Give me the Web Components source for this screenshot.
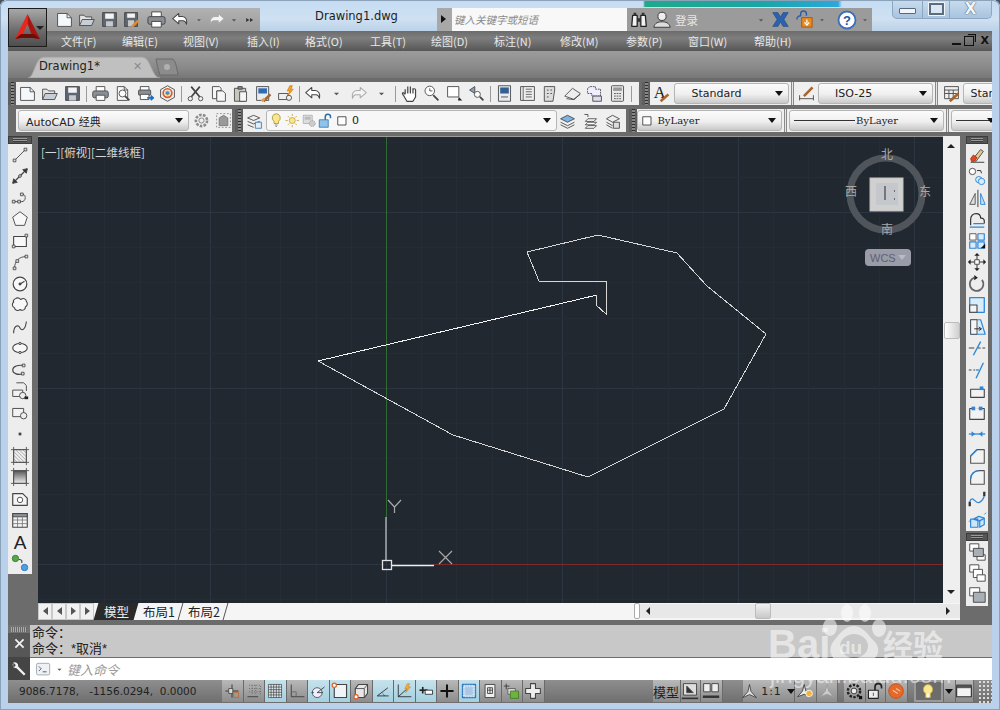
<!DOCTYPE html>
<html lang="zh">
<head>
<meta charset="utf-8">
<title>AutoCAD</title>
<style>
  html, body { margin: 0; padding: 0; background: #4a5562; overflow: hidden; }
  body { font-family: "Liberation Sans", "Noto Sans CJK SC", sans-serif; }
</style>
</head>
<body>
<cad-app>
  <cad-titlebar slot="title" doc="Drawing1.dwg" search="键入关键字或短语" user="登录"></cad-titlebar>
  <cad-menubar items="文件(F) 编辑(E) 视图(V) 插入(I) 格式(O) 工具(T) 绘图(D) 标注(N) 修改(M) 参数(P) 窗口(W) 帮助(H)" widths="61 61 64 58 65 61 63 66 66 62 66 50"></cad-menubar>
  <cad-doctabs label="Drawing1*"></cad-doctabs>

  <cad-toolrow>
    <cad-toolbar style="width:631px">
      <cad-icons icons="new open save | print preview publish pub3d | cut copy paste match block | undo dd redo dd | pan zoomrt zoomwin zoomprev | props dc palette sheet markup calc | help"></cad-icons>
    </cad-toolbar>
    <cad-toolbar style="flex:1;margin-left:3px" overflow>
      <cad-icons icons="textstyle"></cad-icons>
      <cad-combo style="width:115px;margin-left:1px;--indent:10px">Standard</cad-combo>
      <cad-rule></cad-rule>
      <cad-icons icons="dimstyle"></cad-icons>
      <cad-combo style="width:115px;--indent:9px">ISO-25</cad-combo>
      <cad-rule></cad-rule>
      <cad-icons icons="tablestyle"></cad-icons>
      <cad-combo style="width:50px" bare>Standard</cad-combo>
    </cad-toolbar>
  </cad-toolrow>

  <cad-toolrow>
    <cad-toolbar style="width:224px" nogrip>
      <cad-combo style="width:171px;margin:0 1px 0 2px">AutoCAD 经典</cad-combo>
      <cad-icons icons="gear wsbox"></cad-icons>
    </cad-toolbar>
    <cad-toolbar style="width:391px;margin-left:3px">
      <cad-icons icons="layers"></cad-icons>
      <cad-combo style="width:291px" white>
        <cad-icons slot="lead" icons="bulb sun frozen unlock swatch" tight></cad-icons>0
      </cad-combo>
      <cad-icons icons="layer1 layer2 layer3"></cad-icons>
    </cad-toolbar>
    <cad-toolbar style="flex:1;margin-left:3px" overflow>
      <cad-combo style="width:145px;padding-left:1px" serif>
        <cad-icons slot="lead" icons="swatch" tight></cad-icons>ByLayer
      </cad-combo>
      <cad-rule></cad-rule>
      <cad-combo style="width:155px" serif line>ByLayer</cad-combo>
      <cad-rule></cad-rule>
      <cad-combo style="width:50px" serif line></cad-combo>
    </cad-toolbar>
  </cad-toolrow>

  <cad-workspace>
    <cad-dock slot="left" icons="line xline pline polygon rect arc circle cloud spline ellipse ellarc insert makeblock point hatch gradient region table text addsel"></cad-dock>
    <cad-canvas slot="canvas">
      <cad-viewcube></cad-viewcube>
    </cad-canvas>
    <cad-vscroll slot="scroll"></cad-vscroll>
    <cad-layouttabs slot="tabs" active="模型" others="布局1 布局2"></cad-layouttabs>
    <div slot="right" style="width:22px">
      <cad-dock style="width:22px" icons="erase mcopy mirror offset array move rotate scale stretch trim extend breakpt break join chamfer fillet blend explode"></cad-dock>
      <cad-dock style="width:22px;margin-top:2px" icons="front back above"></cad-dock>
    </div>
  </cad-workspace>

  <cad-command history="命令&#65306;|命令&#65306;*取消*" hint="键入命令"></cad-command>
  <cad-statusbar coords="9086.7178,   -1156.0294,  0.0000"></cad-statusbar>
  <cad-watermark slot="over"></cad-watermark>
</cad-app>

<script>
const pg = '<path d="M5 3h8l4 4v12H5z" fill="#f4f6f8"/><path d="M13 3v4h4"/>';
const lens = '<circle cx="11" cy="11" r="4" fill="#fff"/><path d="M14 14l5 5" stroke-width="2"/>';
const grip = (x, y, c = '#333') => `<rect x="${x - 1.5}" y="${y - 1.5}" width="3" height="3" fill="#ddd" stroke="${c}" stroke-width=".8"/>`;
const blue = '#2f86d6';

const ICONS = {
  new: '<path d="M3 4h11l5 5v10H3z" fill="#f5f8fa"/><path d="M14 4v5h5"/>',
  open: '<path d="M3 18V6h5l2 2h7v3" fill="#e3e3e3"/><path d="M3 18l3-7h14l-3 7z" fill="#c7ced6"/>',
  save: '<path d="M3 3h16v16H3z" fill="#5f6773" stroke="#444"/><path d="M6 4h10v6H6z" fill="#f4f4f4" stroke="none"/><path d="M7 13h8v6H7z" fill="#c6c9cd" stroke="none"/>',
  saveas: '<path d="M3 3h15v16H3z" fill="#5f6773" stroke="#444"/><path d="M6 4h9v5H6z" fill="#f4f4f4" stroke="none"/><path d="M7 12h7v7H7z" fill="#c6c9cd" stroke="none"/><path d="M12 19l7-7" stroke="#e98a1a" stroke-width="3"/>',
  print: '<path d="M6 8V3h10v5" fill="#fff"/><rect x="2" y="8" width="18" height="8" rx="2" fill="#8a8f96"/><path d="M6 13h10v6H6z" fill="#fff"/>',
  preview: pg + lens,
  publish: '<path d="M5 7V3h10v4" fill="#fff"/><rect x="3" y="7" width="14" height="6" rx="1" fill="#8a8f96"/><path d="M5 12h10v6H5z" fill="#fff"/><path d="M13 16h6M17 13.5l3 2.5-3 2.5" stroke="#1b6fc2" stroke-width="2"/>',
  pub3d: '<path d="M11 2l8 4.500v9L11 20l-8-4.500v-9z" fill="#eee"/><circle cx="11" cy="10.500" r="5" fill="none" stroke="#e2562a" stroke-width="2"/><circle cx="11" cy="10.500" r="2.500" fill="#3a8fd8" stroke="#e8c020"/>',
  cut: '<path d="M6 3l10 12M16 3L6 15" stroke-width="2"/><circle cx="5" cy="17" r="2.500" fill="#eee"/><circle cx="17" cy="17" r="2.500" fill="#eee"/>',
  copy: '<path d="M4 3h8l2 2v3H9v9H4z" fill="#f4f6f8"/><path d="M9 8h7l3 3v9H9z" fill="#f4f6f8"/>',
  paste: '<path d="M4 5h13v15H4z" fill="#c9c6bd"/><path d="M8 3h5v3H8z" fill="#888"/><path d="M10 9h8v11h-8z" fill="#f5f5f5"/>',
  match: '<path d="M3 3h14v16H3z" fill="#e7ecf2"/><path d="M5 5h10v6H5z" fill="#2e6bb0" stroke="none"/><path d="M11 20l8-8" stroke="#a8642a" stroke-width="3"/><path d="M9 20l3-3" stroke="#e8a13a" stroke-width="3"/>',
  block: '<path d="M3 11h11v7H3z" fill="#eee"/><circle cx="15" cy="16" r="3" fill="#eee"/><path d="M16 2l-3 6h3l-2 5 6-7h-3l2-4z" fill="#f5a81c" stroke="#c9670e" stroke-width=".7"/>',
  undo: '<path d="M9 4L2 10l7 6v-3.500h5c2 0 3 1 4 4 1-5-1-9-5-9H9z" fill="#fff" stroke="#444" stroke-width="1.200"/>',
  redo: '<path d="M13 4l7 6-7 6v-3.500H8c-2 0-3 1-4 4-1-5 1-9 5-9h4z" fill="#f4f4f4" stroke="#aaa" stroke-width="1.200"/>',
  dd: '<path d="M8 10h6l-3 3z" fill="#555" stroke="none"/>',
  more: '<path d="M5 8l5 3-5 3zM11 8l5 3-5 3z" fill="#333" stroke="none"/>',
  pan: '<path d="M6 12V6M9 11V3M12 11V3M15 11V5M6 12L4 10c-2 0-1 2 0 3l4 7h7l3-5V7c0-2-3-2-3 0" fill="#fff" stroke-width="1.400"/>',
  zoomrt: '<circle cx="9" cy="8" r="5.500" fill="#fff"/><path d="M9 5v3h3"/><path d="M13 13l6 6" stroke-width="2"/>',
  zoomwin: '<path d="M3 3h13v12H3z" fill="#fff"/><path d="M16 15l4 4H15z" fill="#222" stroke="none"/>',
  zoomprev: '<path d="M9 3L3 7l6 4z" fill="#8aa0b8"/>' + '<circle cx="12" cy="12" r="3.500" fill="#fff"/><path d="M15 15l4 4" stroke-width="2"/>',
  props: '<path d="M4 2h14v18H4z" fill="#e6ebf0"/><path d="M6 4h10v7H6z" fill="#345f92" stroke="none"/><path d="M7 15h8"/>',
  dc: '<path d="M3 3h16v16H3z" fill="#eee"/><path d="M6 3v16M9 6h7M9 9h7M9 12h7M9 15h7" stroke="#555"/>',
  palette: '<path d="M5 3h12v4l-2 13H5z" fill="#ddd"/><path d="M8 7h2M12 7h2M8 11h2M12 11h2M8 15h2"/>',
  sheet: '<path d="M2 14l9-9 9 6-7 7z" fill="#eee"/><path d="M4 17l8 1 8-6"/>',
  markup: '<path d="M6 3h6v3h6v8H8v-3H3V5z" fill="#eef" stroke-dasharray="2 1"/><path d="M9 14h10v6H9z" fill="#dde"/>',
  calc: '<rect x="4" y="2" width="14" height="18" rx="1" fill="#e8e8e8"/><path d="M6 4h10v4H6z" fill="#999" stroke="none"/><path d="M7 11h8M7 14h8M7 17h8" stroke-dasharray="2 1"/>',
  help: '<path d="M4 4h14v15H4z" fill="#f3f3f3" stroke="#333"/><text x="11" y="16" font-family="Liberation Sans" font-weight="700" font-size="13" text-anchor="middle" fill="#333" stroke="none">?</text>',
  textstyle: '<text x="2" y="16" font-family="Liberation Serif" font-size="19" fill="#222" stroke="none">A</text><path d="M10 20l9-8" stroke="#a8642a" stroke-width="3"/>',
  dimstyle: '<path d="M3 13v6M19 13v6M3 17h16"/><path d="M8 14l10-10" stroke="#a8642a" stroke-width="3"/>',
  tablestyle: '<path d="M3 3h16v14H3z" fill="#eee"/><path d="M3 7h16M3 11h16M8 7v10M13 7v10"/><path d="M9 20l10-9" stroke="#a8642a" stroke-width="3"/>',
  gear: '<circle cx="11" cy="11" r="6.500" fill="none" stroke-dasharray="3 1.500" stroke-width="3" stroke="#8b8b8b"/><circle cx="11" cy="11" r="3" fill="#eee" stroke="#777"/>',
  wsbox: '<path d="M3 3h16v16H3z" fill="none" stroke="#888" stroke-dasharray="2 2"/><path d="M6 8l5-3 5 3v9H6z" fill="#999" stroke="#777"/>',
  layers: '<path d="M3 8l7-3 7 3-7 3zM3 12l7 3 7-3M3 16l7 3" fill="none"/><rect x="12" y="13" width="7" height="7" fill="#e4eef7" stroke="#3a7ab8"/>',
  bulb: '<path d="M11 2a5.500 5.500 0 0 0-3 10v3h6v-3a5.500 5.500 0 0 0-3-10z" fill="#fbe78a" stroke="#a08a3a"/><path d="M9 17h4M10 19h2" stroke="#777"/>',
  sun: '<circle cx="11" cy="11" r="4" fill="#fbe78a" stroke="#b79a3a"/><path d="M11 2v3M11 17v3M2 11h3M17 11h3M5 5l2 2M15 15l2 2M17 5l-2 2M5 17l2-2" stroke="#b79a3a"/>',
  frozen: '<path d="M3 4h12v11H3z" fill="#ddd" stroke="#aaa"/><path d="M5 6h8v4H5z" fill="#bbb" stroke="none"/><circle cx="15" cy="15" r="4" fill="#ccc" stroke="#999" stroke-dasharray="2 1"/>',
  unlock: '<path d="M3 10h12v10H3z" fill="#8fc3ea" stroke="#2c6ea8"/><path d="M11 10V6a3.500 3.500 0 0 1 7 0v2" stroke="#2c6ea8" stroke-width="2"/>',
  swatch: '<path d="M5 6h11v11H5z" fill="#fff" stroke="#222"/>',
  layer1: '<path d="M3 9l8-4 8 4-8 4z" fill="#7db4e4"/><path d="M3 13l8 4 8-4M3 16l8 4 8-4" stroke="#444"/>',
  layer2: '<path d="M8 9h10l-3 3H5zM8 13h10l-3 3H5zM8 17h10l-3 3H5z" fill="#fff"/><path d="M4 4h4v3" stroke="#444"/>',
  layer3: '<path d="M4 9l7-4 8 4-8 4zM4 13l7 4M4 16l7 4" fill="#eee"/><rect x="12" y="13" width="7" height="7" fill="#ddd"/>',
  line: '<path d="M5 17L17 5"/>' + grip(5, 17) + grip(17, 5),
  xline: '<path d="M3 19L19 3" stroke-width="1.300"/><path d="M3 19l5-1-4-4zM19 3l-5 1 4 4z" fill="#333"/><circle cx="11" cy="11" r="1.500" fill="#ddd"/>',
  pline: '<path d="M4 15h9c5 0 5-9 0-8" fill="none"/>' + grip(4, 15) + grip(10, 15) + grip(13, 7),
  polygon: '<path d="M11 3l8 6-3 9H6L3 9z" fill="#f8f8f8" stroke="#444"/>',
  rect: '<path d="M4 6h14v11H4z" fill="#f8f8f8" stroke="#444" stroke-width="1.200"/>' + grip(18, 5) + grip(4, 17),
  arc: '<path d="M5 18c0-8 5-13 13-13"/>' + grip(5, 18) + grip(8, 10) + grip(18, 5),
  circle: '<circle cx="11" cy="11" r="7.500" fill="#f8f8f8" stroke-width="1.300"/><path d="M11 11l5-3" stroke-width="1.200"/><circle cx="11" cy="11" r="1.200" fill="#333"/>',
  cloud: '<path d="M6 4c3-2 5 0 6 1 2-2 6-1 6 2 2 2 1 5-1 6 0 3-3 5-6 3-2 2-6 1-6-2-3-1-3-5-1-6-1-2 0-3 2-4z" fill="#f8f8f8" stroke-width="1.200"/>',
  spline: '<path d="M4 18c0-9 5-10 7-6s6 2 7-7" stroke-width="1.200"/>',
  ellipse: '<ellipse cx="11" cy="11" rx="8" ry="5" fill="#f8f8f8" stroke-width="1.200"/><circle cx="11" cy="6" r="1.300" fill="#ccc"/><circle cx="11" cy="16" r="1.300" fill="#ccc"/>',
  ellarc: '<path d="M14 15C9 17 3 15 3 11s6-6 12-5" stroke-width="1.200"/>' + grip(15, 6) + grip(14, 15),
  insert: '<path d="M7 2h8l3 3v6" fill="#eee"/><path d="M3 10h11v7H3z" fill="#f2f2f2"/><circle cx="14" cy="16" r="3.500" fill="#eee"/><path d="M16 17h4v3h-4z" fill="#222" stroke="none"/>',
  makeblock: '<path d="M3 6h12v9H3z" fill="#f2f2f2"/><circle cx="15" cy="14" r="3.500" fill="#eee"/>',
  point: '<rect x="9.500" y="9.500" width="3" height="3" fill="#444" stroke="none"/>',
  hatch: '<path d="M4 4h14v14H4z" fill="#eee"/><path d="M6 4l12 12M10 4l8 8M14 4l4 4M4 6l12 12M4 10l8 8M4 14l4 4" stroke="#888" stroke-width=".7"/><path d="M1 4h20M1 18h20M4 1v20M18 1v20" stroke="#555"/>',
  gradient: '<defs><linearGradient id="g" x2="0" y2="1"><stop offset="0" stop-color="#555"/><stop offset="1" stop-color="#eee"/></linearGradient></defs><path d="M4 4h14v14H4z" fill="url(#g)"/><path d="M1 4h20M1 18h20M4 1v20M18 1v20" stroke="#555"/>',
  region: '<path d="M3 5h11l5 5v8H3z" fill="#f4f4f4" stroke-width="1.300"/><circle cx="11" cy="12" r="3" fill="#fff"/>',
  table: '<path d="M3 4h16v15H3z" fill="#f4f4f4" stroke="#444" stroke-width="1.200"/><path d="M3 4h16v3.500H3z" fill="#8e939a"/><path d="M3 11h16M3 15h16M8.300 8v11M13.600 8v11" stroke="#666" stroke-width=".8"/>',
  text: '<text x="11" y="19" font-family="Liberation Sans" font-size="21" text-anchor="middle" fill="#222" stroke="none">A</text>',
  addsel: '<circle cx="6" cy="6" r="3.500" fill="#55a845" stroke="#3a7a30"/><circle cx="16" cy="16" r="3.500" fill="#4da0e6" stroke="#2c75b8"/><path d="M10 7l3 1v3" stroke="#222"/>',
  erase: '<path d="M4 19h15" stroke="#333"/><path d="M6 16l9-11 3 2-8 11z" fill="#e5c98d"/><path d="M4 15l3-4 4 3-3 4H5z" fill="#e14a22" stroke="#a9340f"/>',
  mcopy: '<circle cx="6" cy="6" r="3.500" fill="#fff"/><path d="M11 5h4l1 3" stroke="#222"/><circle cx="13" cy="15" r="3.500" fill="#d9ecfa" stroke="' + blue + '"/><circle cx="16" cy="17" r="3.500" fill="#d9ecfa" stroke="' + blue + '"/>',
  mirror: '<path d="M3 18L9 6v12z" fill="#ddd" stroke="#555"/><path d="M12 2v19" stroke="#333"/><path d="M15 6l5 12h-5z" fill="#bfe0f6" stroke="' + blue + '"/>',
  offset: '<path d="M4 18V12c0-5 3-7 6-7s5 2 5 5h1c2 0 3 2 3 3v3" stroke="#333" stroke-width="1.300"/><path d="M3 20h16M7 16h12" stroke="' + blue + '" stroke-width="1.400"/>',
  array: '<path d="M3 3h7v7H3z" fill="#fff" stroke="#555"/><path d="M12 3h7v7h-7zM3 12h7v7H3z" fill="#d9ecfa" stroke="' + blue + '" stroke-width="1.300"/><path d="M12 12h7v7h-7z" fill="#d9ecfa" stroke="' + blue + '" stroke-width="1.300"/><path d="M15 19h5v-5z" fill="#111" stroke="none"/>',
  move: '<path d="M11 3v16M3 11h16" stroke="#222"/><path d="M11 1l3 3H8zM11 21l3-3H8zM1 11l3-3v6zM21 11l-3-3v6z" fill="#222" stroke="none"/><rect x="8.500" y="8.500" width="5" height="5" fill="#fff"/>',
  rotate: '<path d="M16.500 6.500A7.500 7.500 0 1 1 8 4" stroke-width="2" stroke="#666"/><path d="M8 1l4 3-4 3z" fill="#222" stroke="none"/>',
  scale: '<path d="M3 3h16v16H3z" fill="#d9ecfa" stroke="' + blue + '" stroke-width="1.400"/><path d="M3 11h8v8H3z" fill="#f4f4f4" stroke="#444" stroke-width="1.200"/>',
  stretch: '<path d="M4 3h11l5 16H4z" fill="#d9ecfa" stroke="' + blue + '" stroke-width="1.300"/><path d="M4 3h7v16H4z" fill="#f4f4f4" stroke="#444"/><path d="M8 13h7M13 11l3 2-3 2" stroke="#222"/>',
  trim: '<path d="M2 11h6" stroke="#333"/><path d="M12 11h8" stroke="#333" stroke-dasharray="3 2"/><path d="M7 19l8-15" stroke="' + blue + '" stroke-width="1.500"/>',
  extend: '<path d="M2 11h7" stroke="#333" stroke-dasharray="3 2"/><path d="M10 11h3" stroke="' + blue + '" stroke-width="1.500"/><path d="M10 20l8-17" stroke="' + blue + '" stroke-width="1.500"/>',
  breakpt: '<path d="M4 9h15v9H4z" fill="#f2f2f2" stroke="#444" stroke-width="1.200"/><rect x="14" y="6" width="4" height="4" fill="' + blue + '" stroke="none"/>',
  break: '<path d="M3 6h16v12H3z" fill="#f2f2f2" stroke="#444" stroke-width="1.200"/><path d="M8 5h5" stroke="#eee" stroke-width="3"/><rect x="5" y="4" width="4" height="4" fill="' + blue + '" stroke="none"/><rect x="13" y="4" width="4" height="4" fill="' + blue + '" stroke="none"/>',
  join: '<path d="M2 11h18" stroke="' + blue + '" stroke-width="1.400"/><path d="M5 8l4 3-4 3zM17 8l-4 3 4 3z" fill="' + blue + '" stroke="none"/>',
  chamfer: '<path d="M4 19V11l7-7h8v15z" fill="#f2f2f2" stroke="#555" stroke-width="1.200"/><path d="M4 11l7-7" stroke="' + blue + '" stroke-width="1.600"/>',
  fillet: '<path d="M4 19v-6c0-5 4-9 9-9h6v15z" fill="#f2f2f2" stroke="#555" stroke-width="1.200"/><path d="M4 13c0-5 4-9 9-9" stroke="' + blue + '" stroke-width="1.600"/>',
  blend: '<path d="M3 19v-5M19 8V3" stroke="#333" stroke-width="2.500"/><path d="M3 14c3-8 6 2 10 1s5-5 6-7" stroke="' + blue + '" stroke-width="1.500"/>',
  explode: '<path d="M7 10l6-3 6 2-6 3zM4 10h8v9H4zM14 12l5-3v7l-5 3z" fill="#cfe6f8" stroke="' + blue + '" stroke-width="1.300"/><path d="M2 13l2-2M19 5l2-2" stroke="' + blue + '"/>',
  front: '<path d="M3 2h10v8H3z" fill="#fff"/><path d="M11 14h9v6h-9z" fill="#fff"/><path d="M7 7h11v9H7z" fill="#a9afb6"/>',
  back: '<path d="M3 2h10v8H3z" fill="#fff"/><path d="M7 7h10v9H7z" fill="#fff"/><path d="M11 13h9v7h-9z" fill="#fff"/>',
  above: '<path d="M3 3h11v9H3z" fill="#fff"/><path d="M7 8h13v11H7z" fill="#a9afb6"/>',
  snapinf: '<path d="M11 3v16M3 11h16" stroke="#222"/><rect x="7" y="8" width="5" height="6" fill="#ddd"/><path d="M13 13h6v6h-6z" fill="none" stroke="#c8642a"/>',
  snap: '<path d="M5 4h14v12M5 8h14M5 12h14M9 4v12M13 4v12" stroke="#555" stroke-dasharray="1 2"/><path d="M3 18h13" stroke="#333"/>',
  grid: '<path d="M3 3h16v16H3zM3 6.200h16M3 9.400h16M3 12.600h16M3 15.800h16M6.200 3v16M9.400 3v16M12.600 3v16M15.800 3v16" stroke="#333" stroke-width=".8" fill="#e6eef2"/>',
  ortho: '<path d="M4 3v15h16" stroke="#333"/><path d="M4 12h6v6" stroke="#666"/>',
  polar: '<circle cx="10" cy="13" r="6" fill="#eef"/><path d="M10 13l9-7M10 13h7" stroke="#333"/><path d="M3 13h3" stroke="#333"/>',
  osnap: '<path d="M4 3h15v16H4z" fill="#f0f4f6" stroke="#444" stroke-width="1.400"/><circle cx="4" cy="4" r="2.600" fill="#fff" stroke="#e0602a" stroke-width="1.500"/>',
  osnap3: '<path d="M8 3h11v11l-4 5H4V8z" fill="#e7e7e7" stroke="#444" stroke-width="1.300"/><path d="M4 8h11v11M15 8l4-5" stroke="#444"/><circle cx="5" cy="18" r="2.600" fill="#fff" stroke="#e0602a" stroke-width="1.500"/>',
  otrack: '<path d="M4 17h14" stroke="#222"/><path d="M4 17L17 7" stroke="#222"/><path d="M10 13l3 4" stroke="#222" stroke-dasharray="1 1"/>',
  ducs: '<path d="M4 3v15h16" stroke="#222"/><path d="M4 18L14 9" stroke="#222"/><path d="M15 2l-3 6h3l-2 5 6-7h-3l2-4z" fill="#f3b02a" stroke="#c9781a" stroke-width=".6"/>',
  dyn: '<path d="M3 10h10" stroke="#222" stroke-width="2"/><path d="M7 6v8" stroke="#222" stroke-width="2"/><path d="M10 10h9v5h-9z" fill="#fff" stroke="#222"/>',
  lwt: '<path d="M3 11h16M11 3v16" stroke="#111" stroke-width="2.500"/>',
  tpy: '<path d="M3 3h16v16H3z" fill="#a9c7e6" stroke="#2f78c4" stroke-width="1.500"/><path d="M5 5h12v12H5z" fill="none" stroke="#dfeaf5" stroke-dasharray="1 1" stroke-width="3"/>',
  qp: '<path d="M5 3h12v16H5z" fill="#efefef" stroke="#333"/><path d="M8 7h6v7H8z" fill="none" stroke="#333"/><path d="M8 10h6M11 7v7" stroke="#333"/>',
  sc: '<path d="M4 2v7M1 5h7" stroke="#333"/><path d="M6 8h9v7H6z" fill="#ddd" stroke="#555"/><path d="M9 11h10v9H9z" fill="#6cb33f" stroke="#3d7a1f"/>',
  plus: '<path d="M8 2h6v6h6v6h-6v6H8v-6H2V8h6z" fill="#eee" stroke="#444" stroke-width="1.300"/>',
  modelview: '<path d="M3 2h16v14H3z" fill="#dedede" stroke="#333"/><path d="M7 13V5l8 8z" fill="#333"/><path d="M1 20h20" stroke="#333" stroke-width="2"/>',
  layoutview: '<path d="M2 2h8v10H2zM12 2h8v10h-8z" fill="#eee" stroke="#333"/><path d="M1 18h20" stroke="#333" stroke-width="3"/>',
  anno: '<path d="M11 2l2 9 7 8-9-4-9 4 7-8z" fill="#ddd" stroke="#333"/>',
  annovis: '<path d="M10 3l2 8 6 7-8-3-8 3 6-7z" fill="#eee" stroke="#333"/><circle cx="16" cy="14" r="4" fill="#f4b437" stroke="#fff"/>',
  annoauto: '<path d="M11 3l2 8 6 7-8-3-8 3 6-7z" fill="#ccc" stroke="#999"/>',
  wsgear: '<circle cx="11" cy="11" r="7.500" fill="none" stroke="#222" stroke-width="3" stroke-dasharray="3 1.700"/><circle cx="11" cy="11" r="3.500" fill="#eee" stroke="#222"/><path d="M17 17h4v4h-4z" fill="#111" stroke="none"/>',
  tblock: '<path d="M3 10h12v10H3z" fill="#eee" stroke="#222" stroke-width="1.300"/><path d="M9 13v4"/><path d="M11 10V6a4 4 0 0 1 8 0v2" stroke="#222" stroke-width="2"/>',
  hw: '<circle cx="11" cy="11" r="9" fill="#e4692a" stroke="#c24f16"/><path d="M7 10l6 4M11 8l5 3" stroke="#f7c39c" stroke-width="1.500"/>',
  lamp: '<path d="M11 3a6 6 0 0 0-3 11v5h6v-5a6 6 0 0 0-3-11z" fill="#fbe88e" stroke="#c0a84a"/><path d="M10 14h2v5h-2z" fill="#fff" stroke="none"/>',
  clean: '<path d="M2 4h18v14H2z" fill="#f4f4f4" stroke="#333" stroke-width="1.400"/><path d="M2 4h18v3H2z" fill="#555"/>',
  binoc: '<path d="M4 6h5v12H3zM13 6h5l1 12h-6z" fill="#f2f2f2" stroke="#222" stroke-width="1.400"/><path d="M9 9h4v4H9z" fill="#333" stroke="none"/><path d="M5 3h3v3H5zM14 3h3v3h-3z" fill="#333" stroke="none"/>',
  user: '<circle cx="11" cy="7" r="4.500" fill="#eee" stroke="#333"/><path d="M2 19c1-5 5-6 9-6s8 1 9 6z" fill="#ddd" stroke="#333"/>',
  x: '<path d="M2 3h6l3 5 3-5h6l-5 8 5 8h-6l-3-5-3 5H2l5-8z" fill="#2b62b0" stroke="#1b437c" stroke-width=".6"/>',
  exch: '<path d="M3 11a4 4 0 0 1 4-4V5a3 3 0 0 1 6 0v2" stroke="#2c5ea8" stroke-width="1.500"/><rect x="8" y="9" width="11" height="10" fill="#e88a1f" stroke="#a45d10"/><path d="M13.500 11v4M11 14l2.500 3 2.500-3" stroke="#fff" stroke-width="1.300"/>',
  qmark: '<circle cx="11" cy="11" r="8.500" fill="#fff" stroke="#3b6fb8" stroke-width="1.800"/><text x="11" y="15.500" font-family="Liberation Sans" font-weight="700" font-size="13" text-anchor="middle" fill="#1f56a6" stroke="none">?</text>',
  term: '<rect x="2" y="3" width="17" height="15" rx="2" fill="#eef1f5" stroke="#8d99a6"/><path d="M5 7l3 3-3 3M10 14h5" stroke="#333"/>',
  wrench: '<path d="M4 3a4.500 4.500 0 0 0 4 7l9 9 2-2-9-9a4.500 4.500 0 0 0-6-5l3 3-1 2-2 1z" fill="#f2f2f2" stroke="none"/>',
  closex: '<path d="M5 5l12 12M17 5L5 17" stroke="#f2f2f2" stroke-width="2.600"/>',
};

class CadBase extends HTMLElement {
  constructor() {
    super();
    this.attachShadow({ mode: 'open' });
  }
  connectedCallback() {
    this.shadowRoot.innerHTML = this.render();
  }
  attr(name, fallback = '') {
    return this.getAttribute(name) ?? fallback;
  }
}

class CadIcon extends CadBase {
  render() {
    const size = this.attr('size', 20);
    return `<style>:host{display:inline-flex;align-items:center;justify-content:center;flex:none}svg{display:block}</style>
      <svg width="${size}" height="${size}" viewBox="0 0 22 22" fill="none" stroke="#444" stroke-width="1" stroke-linejoin="round">${ICONS[this.attr('name')] || ''}</svg>`;
  }
}

// space separated names, "|" gives a separator
class CadIcons extends CadBase {
  render() {
    const tight = this.hasAttribute('tight');
    const cells = this.attr('icons').split(/\s+/).map(n => n === '|'
      ? '<i></i>'
      : `<cad-icon name="${n}" size="${tight ? 17 : 19}"></cad-icon>`).join('');
    return `<style>
      :host{display:inline-flex;align-items:center;height:100%;flex:none}
      cad-icon{width:${tight ? 16.5 : 22.5}px;height:100%}
      i{width:1px;height:16px;margin:0 2.25px;background:#9a9a9a;flex:none}
    </style>${cells}`;
  }
}

class CadRule extends CadBase {
  render() {
    return `<style>:host{display:block;width:3px;margin:0 2px;height:100%;background:#e6e6e6;border:solid #8a8a8a;border-width:0 1px;box-sizing:border-box;flex:none}</style>`;
  }
}

class CadCombo extends CadBase {
  render() {
    const serif = this.hasAttribute('serif');
    const line = this.hasAttribute('line') ? '<b></b>' : '';
    return `<style>
      :host{display:flex;align-items:center;height:21px;box-sizing:border-box;flex:none;border:1px solid #b5b5b5;border-radius:3px;
        background:linear-gradient(#fbfbfb 0,#efefef 55%,#c9c9c9 100%);color:#222;
        font:${serif ? '10px "DejaVu Serif"' : '11px "DejaVu Sans"'},"Noto Sans CJK SC",sans-serif;padding:0 7px;position:relative;overflow:hidden;white-space:nowrap}
      :host([white]){background:#f7f7f7;padding-left:1px}
      :host([bare]){padding-right:0}
      :host([line]) .t{margin-left:auto;margin-right:38px}
      .t{display:flex;align-items:center;gap:2px;padding-left:var(--indent,0)}
      b{position:absolute;left:4px;width:61px;height:1px;background:#333}
      u{position:absolute;right:5px;top:7px;border:4px solid transparent;border-top:5px solid #111;border-bottom:0}
      :host([bare]) u{display:none}
    </style>${line}<span class="t"><slot name="lead"></slot><slot></slot></span><u></u>`;
  }
}

class CadToolbar extends CadBase {
  render() {
    return `<style>
      :host{display:flex;height:100%;flex:none;overflow:hidden}
      .grip{width:8px;flex:none;background:repeating-linear-gradient(#2f2f2f 0 1px,#888 1px 3px) center/3px 100% no-repeat #5e5e5e}
      :host([nogrip]) .grip{width:8px;background:#6b6b6b}
      :host([overflow]){min-width:0}
      .strip{flex:1;display:flex;align-items:center;background:#efefef;min-width:0;overflow:hidden}
    </style><div class="grip"></div><div class="strip"><slot></slot></div>`;
  }
}

class CadToolrow extends CadBase {
  render() {
    return `<style>:host{display:flex;height:23px;margin-top:4px;width:984px}</style><slot></slot>`;
  }
}

class CadTitlebar extends CadBase {
  render() {
    return `<style>
      :host{display:block;height:31px;position:relative;
        background:
          linear-gradient(90deg,#0000 643px,#1fa98a 645px,#1aa6a4 760px,#2aa8dc 838px,#0000 842px) 0 0/100% 7px no-repeat,
          linear-gradient(180deg,#c4dcf2,#cfe1f2 60%,#bcd2e8)}
      .row{display:flex;align-items:stretch;height:23px;position:absolute;top:8px;left:0;right:0;padding-left:47px}
      .qat{width:213px;display:flex;align-items:center;background:linear-gradient(#b2b2b2,#9c9c9c);flex:none;padding-left:6px;box-sizing:border-box}
      .qat cad-icon{width:22.5px}
      .qat cad-icon.a{width:14px}
      .qat cad-icon.b{width:20px}
      .qat cad-icon.c{width:16px}
      .doc{flex:none;width:177px;text-align:center;font:11.500px "DejaVu Sans",sans-serif;color:#1c1c1c;line-height:16px;padding-left:16px;box-sizing:border-box}
      .find{width:190px;flex:none;display:flex;background:#9a9a9a}
      .find u{width:15px;flex:none;position:relative;background:#a8a8a8}
      .find u::after{content:"";position:absolute;left:4px;top:7px;border:4.5px solid transparent;border-left:5px solid #111;border-right:0}
      .find span{flex:1;background:#f8f8f8;font:italic 10.5px "Noto Sans CJK SC",sans-serif;color:#8a8a8a;line-height:23px;padding-left:2px;white-space:nowrap}
      .info{width:245px;flex:none;display:flex;align-items:center;background:#9b9b9b;box-sizing:border-box;padding-left:2px}
      .user{font:11.500px "Noto Sans CJK SC",sans-serif;color:#e6e6e6;width:78px;margin-left:3px}
      .win{position:absolute;top:0;left:892px;width:100px;height:19px;display:flex;box-sizing:border-box;
        border:1px solid #8ba7c2;border-top:0;border-radius:0 0 5px 5px;background:linear-gradient(#c8dcef,#a9c4de)}
      .win div{display:flex;align-items:center;justify-content:center;border-right:1px solid #8ba7c2}
      .win div:last-child{border:0}
      .dash{width:15px;height:4px;background:#f2f5f8;border:1px solid #59697a;border-radius:1px;margin-top:4px}
      .max{width:11px;height:8px;border:2px solid #5c6d80;background:#dbe7f2;outline:1px solid #eef4f9}
      .cl{font:700 15px "DejaVu Sans",sans-serif;color:#f4f7fa;text-shadow:0 0 1px #3c4e60,0 0 1px #3c4e60}
      .app{position:absolute;left:8px;top:8px;width:39px;height:39px;box-sizing:border-box;border:1px solid #1c1c1c;
        background:linear-gradient(#a8a8a8,#6a6a6a 60%,#4e4e4e);z-index:2}
      .app svg{position:absolute;left:3px;top:3px}
      .app u{position:absolute;right:2px;top:17px;border:4px solid transparent;border-top:4px solid #222;border-bottom:0}
    </style>
    <div class="row">
      <div class="qat">
        <cad-icon name="new" size="19"></cad-icon><cad-icon name="open" size="19"></cad-icon><cad-icon name="save" size="19"></cad-icon><cad-icon name="saveas" size="19"></cad-icon>
        <cad-icon name="print" size="21" style="margin:0 2px"></cad-icon><cad-icon name="undo" size="19"></cad-icon><cad-icon class="a" name="dd" size="16"></cad-icon><cad-icon class="b" name="redo" size="19"></cad-icon><cad-icon class="c" name="dd" size="16"></cad-icon><cad-icon class="c" name="more" size="14"></cad-icon>
      </div>
      <div class="doc">${this.attr('doc')}</div>
      <div class="find"><u></u><span>${this.attr('search')}</span></div>
      <div class="info">
        <cad-icon name="binoc" size="20"></cad-icon><cad-icon name="user" size="20" style="margin-left:3px"></cad-icon>
        <span class="user">${this.attr('user')}</span>
        <cad-icon name="dd" size="16" style="margin-right:2px"></cad-icon>
        <cad-icon name="x" size="19"></cad-icon><cad-icon name="exch" size="21" style="margin-left:4px"></cad-icon><cad-icon name="dd" size="14"></cad-icon>
        <cad-icon name="qmark" size="22" style="margin-left:7px"></cad-icon><cad-icon name="dd" size="14"></cad-icon>
      </div>
    </div>
    <div class="win">
      <div style="width:29px"><span class="dash"></span></div>
      <div style="width:26px"><span class="max"></span></div>
      <div style="flex:1"><span class="cl">X</span></div>
    </div>
    <div class="app">
      <svg width="31" height="31" viewBox="0 0 31 31">
        <path d="M15.500 2L3 27l6-1 6.500-14z" fill="#e8261c"/>
        <path d="M15.500 2L28 27l-7-1-5.500-14z" fill="#a81410"/>
        <path d="M3 27l6-1 12 0 7 1-6-5H9z" fill="#6e0c08"/>
      </svg>
      <u></u>
    </div>`;
  }
}

class CadMenubar extends CadBase {
  render() {
    const widths = this.attr('widths').split(' ');
    const items = this.attr('items').split(' ').map((t, i) => `<span style="width:${widths[i]}px">${t}</span>`).join('');
    return `<style>
      :host{display:flex;align-items:center;height:20px;box-sizing:border-box;padding-left:53px;position:relative;
        background:linear-gradient(#6c6c6c,#7e7e7e 35%,#565656);color:#e8e8e8;font:11px "Noto Sans CJK SC",sans-serif}
      span{flex:none;white-space:nowrap}
      .ctl{position:absolute;right:3px;top:3px;display:flex;gap:3px;align-items:center}
      .ctl i{display:block}
      .m{width:9px;height:2px;background:#111;margin-top:7px}
      .r{width:8px;height:8px;border:1px solid #111;box-shadow:2px -2px 0 -1px #666,3px -3px 0 -1px #111}
      .c{font:700 11px "DejaVu Sans",sans-serif;color:#111;margin-left:4px}
    </style>${items}<div class="ctl"><i class="m"></i><i class="r"></i><span class="c">X</span></div>`;
  }
}

class CadDoctabs extends CadBase {
  render() {
    return `<style>
      :host{display:block;height:27px;position:relative;background:linear-gradient(#9c9c9c,#8a8a8a 60%,#777)}
      svg{position:absolute;left:20px;top:5px}
      .t{position:absolute;left:31px;top:8px;font:11.500px "DejaVu Sans",sans-serif;color:#222}
      .x{position:absolute;left:125px;top:9px;font:700 11px "DejaVu Sans",sans-serif;color:#8a8a8a}
    </style>
    <svg width="132" height="22" viewBox="0 0 132 22"><path d="M0 22C6 22 7 2 15 1h100c8 1 9 21 17 21z" fill="#c0c0c0" stroke="#a0a0a0"/></svg>
    <span class="t">${this.attr('label')}</span><span class="x">✕</span>
    <svg style="left:147px;top:7px" width="24" height="18" viewBox="0 0 24 18"><path d="M1 1h17c3 3 4 10 5 16H5C3 11 2 6 1 1z" fill="#8c8c8c" stroke="#6a6a6a"/><circle cx="12" cy="9" r="3" fill="#b0b0b0"/></svg>`;
  }
}

class CadDock extends CadBase {
  render() {
    const icons = this.attr('icons').split(' ').map(n => `<cad-icon name="${n}" size="20"></cad-icon>`).join('');
    return `<style>
      :host{display:block;width:24px}
      .h{height:8px;background:#555;border:1px solid #3c3c3c;box-sizing:border-box;position:relative}
      .h::after{content:"";position:absolute;left:4px;right:4px;top:1px;height:4px;background:repeating-linear-gradient(#999 0 1px,#3c3c3c 1px 2px)}
      .b{background:#ededed;display:flex;flex-direction:column}
      cad-icon{height:21.500px}
    </style><div class="h"></div><div class="b">${icons}</div>`;
  }
}

class CadWorkspace extends CadBase {
  render() {
    return `<style>
      :host{display:grid;grid-template-columns:24px 6px 905px 17px 6px 24px;grid-template-rows:467px 17px;height:484px;margin-top:4px;width:984px;background:#6c6c6c}
      .l{grid-row:1/3;grid-column:1}
      .c{grid-row:1;grid-column:3;position:relative;border-top:1px solid #9c9c9c}
      .s{grid-row:1;grid-column:4}
      .t{grid-row:2;grid-column:3/5}
      .r{grid-row:1/3;grid-column:6;overflow:hidden}
    </style>
    <div class="l"><slot name="left"></slot></div>
    <div class="c"><slot name="canvas"></slot></div>
    <div class="s"><slot name="scroll"></slot></div>
    <div class="t"><slot name="tabs"></slot></div>
    <div class="r"><slot name="right"></slot></div>`;
  }
}

class CadCanvas extends CadBase {
  render() {
    const lines = [];
    for (let i = -10; i < 40; i++) {
      const x = 386 + i * 35.2, y = 564 - i * 35.2, major = i % 5 === 0;
      const c = major ? '#2c3542' : '#252c35';
      if (x > 38 && x < 943) lines.push(`<path d="M${Math.round(x)}.5 137V603" stroke="${c}"/>`);
      if (y > 137 && y < 603) lines.push(`<path d="M38 ${Math.round(y)}.5H943" stroke="${c}"/>`);
    }
    return `<style>
      :host{display:block;height:100%;position:relative;background:#212830;overflow:hidden}
      svg{display:block;position:absolute;inset:0}
      .vp{position:absolute;left:3px;top:7px;font:11.500px "Noto Sans CJK SC",sans-serif;color:#d6d6d6;white-space:nowrap}
    </style>
    <svg width="905" height="466" viewBox="38 137 905 466" fill="none">
      ${lines.join('')}
      <g shape-rendering="crispEdges">
        <path d="M386.500 137V517" stroke="#2f6b33"/>
        <path d="M434 564.500H943" stroke="#7c2a2c"/>
        <path d="M318 361L597 295" stroke="#f4f4f4"/>
        <path d="M527 252L598 235 677 253 707 286 766 334 724 409 588 477 453 435 318 361M597 295L596 305 606 314V281H539L527 252" stroke="#d6d6d6"/>
      </g>
      <path d="M386 517V560" stroke="#b5b5b5" stroke-width="1.400"/>
      <path d="M392 565.500H434" stroke="#eeeeee" stroke-width="1.400"/>
      <rect x="382.500" y="560.500" width="9" height="9" stroke="#e4e4e4" stroke-width="1.300"/>
      <path d="M388 500l6.500 7L401 500M394.500 507V513" stroke="#a8a8a8" stroke-width="1.200"/>
      <path d="M439 551l13 13M452 551l-13 13" stroke="#a8a8a8" stroke-width="1.200"/>
    </svg>
    <span class="vp">[一][俯视][二维线框]</span>
    <slot></slot>`;
  }
}

class CadViewcube extends CadBase {
  render() {
    return `<style>
      :host{position:absolute;left:808px;top:12px;width:80px;height:120px;display:block;font:12px "Noto Sans CJK SC",sans-serif;color:#a9a9a9}
      svg{position:absolute;left:0;top:0}
      span{position:absolute;transform:translate(-50%,-50%);line-height:1}
      .wcs{position:absolute;left:19px;top:100px;width:46px;height:17px;border-radius:4px;background:#9a9caa;color:#5f616c;font:11px "Liberation Sans",sans-serif;display:flex;align-items:center;padding-left:5px;box-sizing:border-box}
      .wcs::after{content:"";position:absolute;right:5px;top:6px;border:4px solid transparent;border-top:5px solid #b8bac6;border-bottom:0}
    </style>
    <svg width="80" height="100" viewBox="0 0 80 100" fill="none">
      <circle cx="40" cy="45" r="36" stroke="#50555c" stroke-width="7"/>
      <rect x="24" y="29" width="33" height="33" fill="#d0d0d0" stroke="#c2c2c2"/>
      <rect x="30" y="34" width="22" height="22" fill="#c4c7cc"/>
      <path d="M39 37v14" stroke="#4d4d4d" stroke-width="1.300"/>
      <path d="M48 42h1M48 50h1" stroke="#4d4d4d" stroke-width="1.300"/>
    </svg>
    <span style="left:41px;top:5px">北</span>
    <span style="left:41px;top:80px">南</span>
    <span style="left:5px;top:42px">西</span>
    <span style="left:79px;top:42px">东</span>
    <div class="wcs">WCS</div>`;
  }
}

class CadVscroll extends CadBase {
  render() {
    return `<style>
      :host{display:block;height:100%;background:#efefef;position:relative}
      i{position:absolute;left:4px;border:4px solid transparent}
      .u{top:8px;border-bottom:4px solid #222;border-top:0}
      .d{bottom:9px;border-top:4px solid #222;border-bottom:0}
      .th{position:absolute;left:1px;width:14px;height:15px;top:186px;border:1px solid #bcbcbc;border-radius:2px;background:linear-gradient(90deg,#fff,#cfcfcf)}
    </style><i class="u"></i><div class="th"></div><i class="d"></i>`;
  }
}

class CadLayouttabs extends CadBase {
  render() {
    const others = this.attr('others').split(' ').map(t => `<span class="tab">${t}</span>`).join('');
    return `<style>
      :host{display:flex;align-items:stretch;height:17px;background:#f5f5f5;font:12.500px "Noto Sans CJK SC",sans-serif;color:#222;position:relative}
      .nav{display:flex;width:56px;flex:none}
      .nav b{flex:1;border:1px solid #c9c9c9;position:relative;background:#f1f1f1}
      .nav b::after{content:"";position:absolute;top:3px;left:4px;border:4.500px solid transparent}
      .nav b.l::after{border-right:5px solid #555;border-left:0}
      .nav b.r::after{border-left:5px solid #555;border-right:0}
      .tabs{display:flex;flex:none;margin-left:2px}
      .tab{display:block;position:relative;z-index:0;box-sizing:border-box;width:45px;padding-left:7px;line-height:17px;height:17px;white-space:nowrap}
      .tab::before{content:"";position:absolute;inset:0 0 0 0;z-index:-1;transform:skewX(-16deg);border-right:1px solid #555}
      .on{width:40px;padding-left:8px;color:#eee}
      .on::before{background:#2a2a2a;border:0}
      .fill{flex:1}
      .hs{position:absolute;left:602px;right:0;top:1px;height:14px;background:#e8e8e8}
      .hs i{position:absolute;top:3px;border:4px solid transparent}
      .hs .a{left:6px;border-right:4px solid #222;border-left:0}
      .hs .b{right:10px;border-left:4px solid #222;border-right:0}
      .hs .t{position:absolute;left:115px;top:-1px;width:14px;height:14px;border:1px solid #bcbcbc;border-radius:2px;background:linear-gradient(#f2f2f2,#c8c8c8)}
      .tick{position:absolute;left:596px;top:0;width:4px;height:14px;border:1px solid #aaa;border-radius:2px;background:#fff}
    </style>
    <div class="nav"><b class="l"></b><b class="l"></b><b class="r"></b><b class="r"></b></div>
    <div class="tabs"><span class="tab on">${this.attr('active')}</span>${others}</div>
    <div class="fill"></div>
    <div class="tick"></div>
    <div class="hs"><i class="a"></i><div class="t"></div><i class="b"></i></div>`;
  }
}

class CadCommand extends CadBase {
  render() {
    const lines = this.attr('history').split('|').map(t => `<div>${t}</div>`).join('');
    return `<style>
      :host{display:grid;grid-template-columns:22px 1fr;grid-template-rows:32px 23px;margin-top:5px;font:13px "Liberation Sans","Noto Sans CJK SC",sans-serif;color:#222;width:984px}
      .hd{background:#575757;position:relative;display:flex;flex-direction:column;align-items:center}
      .hd::before{content:"";width:100%;height:8px;background:repeating-linear-gradient(90deg,#aaa 0 1px,#6a6a6a 1px 2px) center/16px 5px no-repeat #727272}
      .hd cad-icon{margin-top:3px}
      .log{background:#c8c8c8;padding-left:2px;line-height:15.500px}
      .tool{background:#454545;display:flex;align-items:center;justify-content:center}
      .in{background:#fff;border-top:1px solid #6e6e6e;display:flex;align-items:center;padding-left:5px;color:#9a9a9a;font-style:italic}
    </style>
    <div class="hd"><cad-icon name="closex" size="15"></cad-icon></div>
    <div class="log">${lines}</div>
    <div class="tool"><cad-icon name="wrench" size="18"></cad-icon></div>
    <div class="in"><cad-icon name="term" size="17"></cad-icon><cad-icon name="dd" size="15"></cad-icon><span>${this.attr('hint')}</span></div>`;
  }
}

class CadStatusbar extends CadBase {
  render() {
    const cell = (n, on, w = 21.5) => `<b class="${on ? 'on' : ''}" style="width:${w}px"><cad-icon name="${n}" size="18"></cad-icon></b>`;
    const toggles = [['snapinf'], ['snap'], ['grid', 1], ['ortho'], ['polar', 1], ['osnap', 1], ['osnap3'], ['otrack', 1], ['ducs', 1], ['dyn', 1], ['lwt'], ['tpy', 1], ['qp'], ['sc'], ['plus']];
    return `<style>
      :host{display:flex;align-items:stretch;height:23px;width:984px;margin-top:0;background:linear-gradient(#8e8e8e,#6e6e6e);position:relative;font:10.500px "DejaVu Sans",sans-serif;color:#222}
      .xy{width:214px;flex:none;padding-left:11px;line-height:22px;white-space:pre;box-sizing:border-box}
      .cells{display:flex;flex:none}
      b{display:flex;align-items:center;justify-content:center;flex:none;height:22px;background:linear-gradient(#b8b8b8,#8c8c8c);font-weight:400;border-right:1px solid #6a6a6a;box-sizing:border-box}
      b.on{background:linear-gradient(#c6e2ec,#a4d0df)}
      .model{font:13px "Noto Sans CJK SC",sans-serif;margin-left:108px;width:28px}
      .scale{width:52px;gap:3px;font:11px "DejaVu Sans",sans-serif;margin-left:20px;letter-spacing:1px}
      u{border:4px solid transparent;border-top:5px solid #111;border-bottom:0;margin-left:2px;align-self:center}
      .well{width:30px;background:#6c6c6c;margin-left:6px;box-shadow:inset 0 0 0 2px #9a9a9a}
      .corner{margin-left:auto;width:14px;background:radial-gradient(circle,#ddd 1px,#0000 1.500px) 0 0/4px 4px}
    </style>
    <div class="xy">${this.attr('coords')}</div>
    <div class="cells">${toggles.map(t => cell(t[0], t[1])).join('')}</div>
    <b class="model">模型</b>
    ${cell('modelview', 0, 20)}${cell('layoutview', 0, 22)}
    <b class="scale"><cad-icon name="anno" size="17"></cad-icon>1:1<u></u></b>
    ${cell('annovis', 0, 22)}${cell('annoauto', 0, 21)}
    <span style="width:6px"></span>
    ${cell('wsgear', 0, 22)}${cell('tblock', 0, 20)}${cell('hw', 0, 22)}
    <b class="well"><cad-icon name="lamp" size="18"></cad-icon></b>
    <b style="width:12px"><u style="margin:0"></u></b>
    ${cell('clean', 0, 18)}
    <div class="corner"></div>`;
  }
}

class CadWatermark extends CadBase {
  render() {
    return `<style>
      :host{position:absolute;left:768px;top:600px;width:190px;height:100px;display:block;color:rgba(255,255,255,.55);pointer-events:none;font-family:"Liberation Sans",sans-serif}
      span{position:absolute;line-height:1;white-space:nowrap}
      svg{position:absolute;left:0;top:0}
    </style>
    <svg width="190" height="100" viewBox="0 0 190 100" fill="rgba(255,255,255,.55)">
      <ellipse cx="62" cy="27" rx="7" ry="9"/>
      <ellipse cx="79" cy="13" rx="6" ry="9"/>
      <ellipse cx="97" cy="13" rx="6" ry="9"/>
      <ellipse cx="111" cy="28" rx="7" ry="9"/>
      <path fill-rule="evenodd" d="M86 26c9 0 14 9 20 15 8 8 4 19-6 20-6 1-10-1-14-1s-8 3-15 1c-9-2-11-12-6-19 6-7 11-16 21-16zM86 34a14 12 0 1 0 .1 0z"/>
    </svg>
    <span style="left:0;top:24px;font-size:40px;font-weight:700">Bai</span>
    <span style="left:71px;top:38px;font-size:19px;font-weight:700">du</span>
    <span style="left:115px;top:28px;font-size:30px;font-weight:700;font-family:'Noto Sans CJK SC',sans-serif">经验</span>
    <span style="left:2px;top:65px;font-size:22.500px">jingyan.baidu.com</span>`;
  }
}

class CadApp extends CadBase {
  render() {
    return `<style>
      :host{display:block;width:1000px;height:710px;position:relative;overflow:hidden;background:#b9d1ea;border-radius:7px 7px 0 0}
      :host::after{content:"";position:absolute;inset:0;border-radius:7px 7px 0 0;box-shadow:inset 0 0 0 1px #8ca2b8;pointer-events:none}
      .frame{margin:0 8px;width:984px;height:672px;display:flex;flex-direction:column;background:#6b6b6b}
    </style>
    <slot name="title"></slot>
    <div class="frame"><slot></slot></div>
    <slot name="over"></slot>`;
  }
}

const elements = {
  'cad-icon': CadIcon, 'cad-icons': CadIcons, 'cad-rule': CadRule, 'cad-combo': CadCombo,
  'cad-toolbar': CadToolbar, 'cad-toolrow': CadToolrow, 'cad-titlebar': CadTitlebar,
  'cad-menubar': CadMenubar, 'cad-doctabs': CadDoctabs, 'cad-dock': CadDock,
  'cad-workspace': CadWorkspace, 'cad-canvas': CadCanvas, 'cad-viewcube': CadViewcube,
  'cad-vscroll': CadVscroll, 'cad-layouttabs': CadLayouttabs, 'cad-command': CadCommand,
  'cad-statusbar': CadStatusbar, 'cad-watermark': CadWatermark, 'cad-app': CadApp,
};
for (const [name, cls] of Object.entries(elements)) customElements.define(name, cls);
</script>
</body>
</html>
